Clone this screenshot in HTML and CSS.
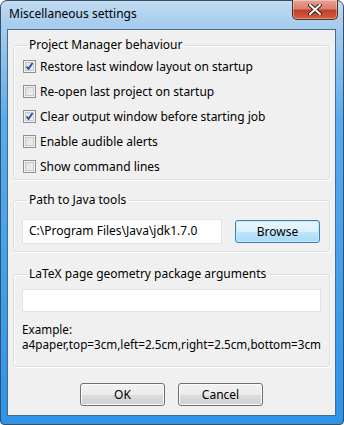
FILE: index.html
```html
<!DOCTYPE html>
<html lang="en">
<head>
  <meta charset="UTF-8" />
  <title>Miscellaneous settings</title>
  <link rel="stylesheet" href="styles.css">
</head>
<body>

  <div class="window">
    <div class="titlebar">
      <span class="title">Miscellaneous settings</span>
      <button class="close-btn">
        <svg width="14" height="11" viewBox="0 0 14 11">
          <path d="M2 1 L12 10 M12 1 L2 10" stroke="#3a1a16" stroke-width="4" stroke-linecap="round"/>
          <path d="M2 1 L12 10 M12 1 L2 10" stroke="#fff" stroke-width="2" stroke-linecap="round"/>
        </svg>
      </button>
    </div>

    <div class="client">
      <!-- Project manager -->
      <fieldset class="group group-pm">
        <legend>Project Manager behaviour</legend>
        <label class="check-row"><span class="checkbox checked"></span>Restore last window layout on startup</label>
        <label class="check-row"><span class="checkbox"></span>Re-open last project on startup</label>
        <label class="check-row"><span class="checkbox checked"></span>Clear output window before starting job</label>
        <label class="check-row"><span class="checkbox"></span>Enable audible alerts</label>
        <label class="check-row"><span class="checkbox"></span>Show command lines</label>
      </fieldset>

      <!-- Java path -->
      <fieldset class="group group-java">
        <legend>Path to Java tools</legend>
        <div class="path-row">
          <div class="textbox path-box">C:\Program Files\Java\jdk1.7.0</div>
          <button class="btn btn-default">Browse</button>
        </div>
      </fieldset>

      <!-- LaTeX geometry -->
      <fieldset class="group group-latex">
        <legend>LaTeX page geometry package arguments</legend>
        <div class="textbox latex-box"></div>
        <div class="example">
          <div>Example:</div>
          <div>a4paper,top=3cm,left=2.5cm,right=2.5cm,bottom=3cm</div>
        </div>
      </fieldset>

      <div class="dialog-buttons">
        <button class="btn">OK</button>
        <button class="btn">Cancel</button>
      </div>
    </div>
  </div>

</body>
</html>
```

FILE: styles.css
```css
* {
  box-sizing: border-box;
}

body {
  margin: 0;
  padding: 0;
  width: 344px;
  height: 425px;
  font-family: 'Noto Sans', sans-serif;
  font-size: 12px;
  color: #000;
  background: #fff;
  overflow: hidden;
}

.window {
  width: 344px;
  height: 425px;
  border: 1px solid #3b4f63;
  border-radius: 7px 7px 4px 4px;
  background: linear-gradient(to bottom, #c2dcf3 0px, #a9cdee 22px, #56acef 120px, #2d94ea 100%);
  padding: 0 7px 8px 6px;
  display: flex;
  flex-direction: column;
}

.titlebar {
  height: 28px;
  position: relative;
  display: flex;
  align-items: center;
  padding-left: 2px;
}

.title {
  margin-top: -3px;
}

.close-btn {
  position: absolute;
  top: -1px;
  right: -2px;
  width: 46px;
  height: 20px;
  border: 1px solid #5a2a22;
  border-top: none;
  border-radius: 0 0 5px 5px;
  background: linear-gradient(to bottom, #e8a393 0%, #d9806c 45%, #c0412b 55%, #d05c40 100%);
  box-shadow: inset 0 0 0 1px rgba(255, 255, 255, 0.35);
  display: flex;
  align-items: center;
  justify-content: center;
  padding: 0;
}

.client {
  flex: 1;
  background: #f0f0f0;
  border: 1px solid #4c6a88;
  padding: 7px 5px 0 5px;
  display: flex;
  flex-direction: column;
}

.group {
  margin: 0;
  border: 1px solid #d5dfe5;
  border-radius: 3px;
  box-shadow: inset 1px 1px 0 #fff, 1px 1px 0 #fff;
  padding: 0 8px;
}

.group legend {
  padding: 0 2px;
  margin-left: 5px;
  line-height: 16px;
}

.group-pm {
  padding-top: 1px;
  padding-bottom: 0;
}

.check-row {
  display: flex;
  align-items: center;
  height: 25px;
  padding-left: 1px;
}

.checkbox {
  width: 13px;
  height: 13px;
  border: 1px solid #8e8f8f;
  background: linear-gradient(135deg, #dcdcdc 0%, #f4f4f4 100%);
  box-shadow: inset 0 0 0 1px #f4f4f4, inset 0 0 0 2px #c8c8c8;
  margin-right: 4px;
  flex-shrink: 0;
}

.checkbox.checked {
  background-image: url("data:image/svg+xml,%3Csvg xmlns='http://www.w3.org/2000/svg' width='11' height='11'%3E%3Cpath d='M2.5 5.5 L4.5 8 L8.5 2' fill='none' stroke='%23214d9a' stroke-width='1.8'/%3E%3C/svg%3E"), linear-gradient(135deg, #dcdcdc 0%, #f4f4f4 100%);
  background-repeat: no-repeat;
  background-position: center;
}

.group-java {
  margin-top: 12px;
  padding-top: 11px;
  padding-bottom: 7px;
}

.path-row {
  display: flex;
  align-items: center;
  gap: 13px;
}

.textbox {
  background: #fff;
  border: 1px solid #e2e3ea;
}

.path-box {
  width: 200px;
  height: 25px;
  line-height: 21px;
  padding-left: 6px;
}

.btn {
  font-family: inherit;
  font-size: 12px;
  color: #000;
  width: 85px;
  height: 23px;
  border: 1px solid #707070;
  border-radius: 3px;
  background: linear-gradient(to bottom, #f2f2f2 0%, #ebebeb 50%, #dddddd 51%, #cfcfcf 100%);
  box-shadow: inset 0 0 0 1px #fcfcfc;
  padding: 0;
}

.btn-default {
  border-color: #3c7fb1;
  background: linear-gradient(to bottom, #eaf6fd 0%, #d9f0fc 50%, #bee6fd 51%, #a7d9f5 100%);
  box-shadow: inset 0 0 0 1px #c8eafc;
}

.group-latex {
  margin-top: 14px;
  padding-top: 7px;
  padding-bottom: 14px;
}

.latex-box {
  height: 23px;
}

.example {
  margin-top: 10px;
  font-size: 11.7px;
  line-height: 15px;
}

.dialog-buttons {
  display: flex;
  justify-content: center;
  gap: 13px;
  margin-top: 16px;
}
```
